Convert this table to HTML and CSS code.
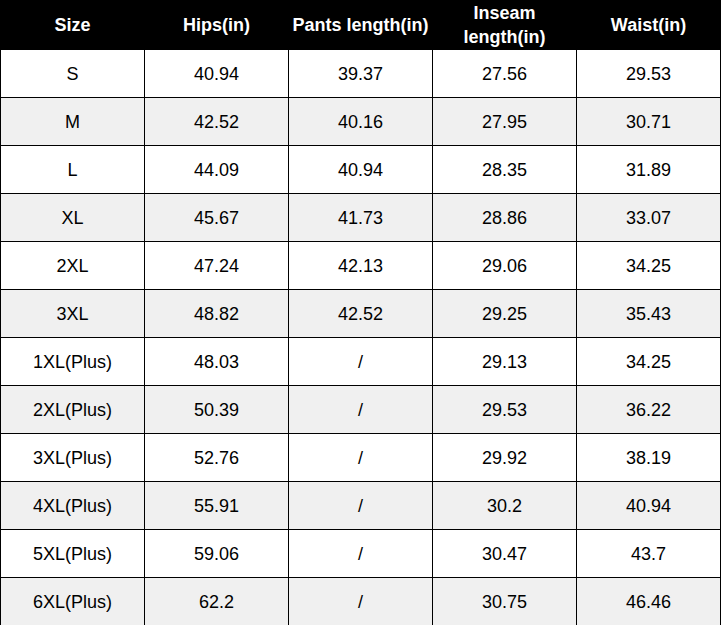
FILE: index.html
```html
<!DOCTYPE html>
<html>
<head>
<meta charset="utf-8">
<link rel="stylesheet" href="styles.css">
</head>
<body>
<table class="size-table">
  <thead>
    <tr><th>Size</th><th>Hips(in)</th><th>Pants length(in)</th><th>Inseam length(in)</th><th>Waist(in)</th></tr>
  </thead>
  <tbody>
    <tr><td>S</td><td>40.94</td><td>39.37</td><td>27.56</td><td>29.53</td></tr>
    <tr><td>M</td><td>42.52</td><td>40.16</td><td>27.95</td><td>30.71</td></tr>
    <tr><td>L</td><td>44.09</td><td>40.94</td><td>28.35</td><td>31.89</td></tr>
    <tr><td>XL</td><td>45.67</td><td>41.73</td><td>28.86</td><td>33.07</td></tr>
    <tr><td>2XL</td><td>47.24</td><td>42.13</td><td>29.06</td><td>34.25</td></tr>
    <tr><td>3XL</td><td>48.82</td><td>42.52</td><td>29.25</td><td>35.43</td></tr>
    <tr><td>1XL(Plus)</td><td>48.03</td><td>/</td><td>29.13</td><td>34.25</td></tr>
    <tr><td>2XL(Plus)</td><td>50.39</td><td>/</td><td>29.53</td><td>36.22</td></tr>
    <tr><td>3XL(Plus)</td><td>52.76</td><td>/</td><td>29.92</td><td>38.19</td></tr>
    <tr><td>4XL(Plus)</td><td>55.91</td><td>/</td><td>30.2</td><td>40.94</td></tr>
    <tr><td>5XL(Plus)</td><td>59.06</td><td>/</td><td>30.47</td><td>43.7</td></tr>
    <tr><td>6XL(Plus)</td><td>62.2</td><td>/</td><td>30.75</td><td>46.46</td></tr>
  </tbody>
</table>
</body>
</html>
```
FILE: styles.css
```css
html, body {
  margin: 0;
  padding: 0;
  background: #fff;
}

.size-table {
  width: 721px;
  table-layout: fixed;
  border-collapse: separate;
  border-spacing: 1px;
  background: #000;
  font-family: "Liberation Sans", Arial, sans-serif;
  font-size: 18px;
  color: #000;
}

.size-table th,
.size-table td {
  height: 47px;
  padding: 0;
  text-align: center;
  vertical-align: middle;
}

.size-table th {
  background: #000;
  color: #fff;
  font-weight: bold;
  line-height: 24px;
}

.size-table td {
  background: #fff;
  line-height: 20px;
}

.size-table tbody tr:nth-child(even) td {
  background: #f0f0f0;
}
```
